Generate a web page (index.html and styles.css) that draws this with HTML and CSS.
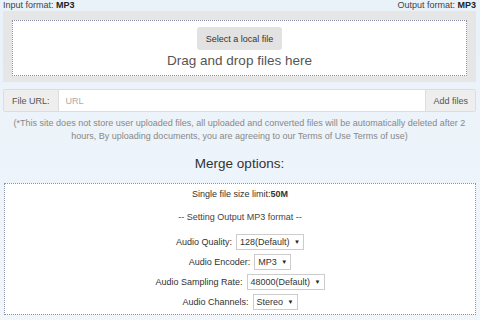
FILE: index.html
```html
<!DOCTYPE html>
<html lang="en">
<head>
    <meta charset="UTF-8">
    <meta name="viewport" content="width=device-width, initial-scale=1.0">
    <title>Merge MP3</title>
    <link rel="stylesheet" href="styles.css">
</head>
<body>
    <div class="formats">
        <span>Input format: <b>MP3</b></span>
        <span>Output format: <b>MP3</b></span>
    </div>

    <!-- Upload area -->
    <section class="upload">
        <div class="drop-zone">
            <button class="pick-btn">Select a local file</button>
            <div class="drop-text">Drag and drop files here</div>
        </div>
    </section>

    <div class="url-group">
        <span class="addon">File URL:</span>
        <input type="text" class="url-input" placeholder="URL">
        <span class="addon addon-btn">Add files</span>
    </div>

    <p class="notice">(*This site does not store user uploaded files, all uploaded and converted files will be automatically deleted after 2 hours, By uploading documents, you are agreeing to our Terms of Use Terms of use)</p>

    <h2 class="title">Merge options:</h2>

    <!-- Options -->
    <section class="options">
        <div class="limit">Single file size limit:<b>50M</b></div>
        <div class="setting">-- Setting Output MP3 format --</div>
        <div class="row">
            <label>Audio Quality:</label>
            <span class="select">128(Default) <i>&#9660;</i></span>
        </div>
        <div class="row">
            <label>Audio Encoder:</label>
            <span class="select">MP3 <i>&#9660;</i></span>
        </div>
        <div class="row">
            <label>Audio Sampling Rate:</label>
            <span class="select">48000(Default) <i>&#9660;</i></span>
        </div>
        <div class="row">
            <label>Audio Channels:</label>
            <span class="select">Stereo <i>&#9660;</i></span>
        </div>
    </section>
</body>
</html>
```

FILE: styles.css
```css
body {
    font-family: "Liberation Sans", Arial, sans-serif;
    font-size: 9px;
    color: #333;
    margin: 0;
    padding: 0 4px 0 3px;
    background: linear-gradient(to bottom, #e9f1f9, #f1f6fb);
    height: 320px;
    overflow: hidden;
}

.formats {
    display: flex;
    justify-content: space-between;
    height: 11px;
    line-height: 10px;
    color: #444;
}

.formats b {
    color: #222;
}

.upload {
    background-color: #e6e6e6;
    padding: 9px 9px 6px 9px;
}

.drop-zone {
    background-color: #fff;
    border: 1px dotted #8a8fa8;
    height: 54px;
    display: flex;
    flex-direction: column;
    align-items: center;
}

.pick-btn {
    margin-top: 6px;
    background-color: #e2e2e2;
    border: none;
    border-radius: 3px;
    font-family: inherit;
    font-size: 9px;
    color: #333;
    width: 85px;
    height: 23px;
    padding: 0;
}

.drop-text {
    font-size: 13.5px;
    color: #555;
    margin-top: 3px;
}

.url-group {
    display: flex;
    margin-top: 7px;
    height: 21px;
    border: 1px solid #ddd;
    border-radius: 2px;
}

.addon {
    background-color: #eee;
    color: #555;
    display: flex;
    align-items: center;
    padding: 0 8px 0 8px;
    white-space: nowrap;
    flex: none;
}

.addon-btn {
    padding: 0 7px 0 7px;
    border-left: 1px solid #ddd;
}

.url-input {
    flex: 1;
    min-width: 0;
    border: none;
    border-left: 1px solid #ddd;
    padding: 0 0 0 7px;
    font-family: inherit;
    font-size: 9px;
    outline: none;
}

.url-input::placeholder {
    color: #aaa;
}

.notice {
    margin: 5px 0 0 0;
    padding: 0 6px;
    text-align: center;
    color: #888;
    line-height: 13px;
}

.title {
    margin: 12px 0 0 0;
    text-align: center;
    font-weight: normal;
    font-size: 13.5px;
    color: #333;
    line-height: 18px;
}

.options {
    margin: 10px 0 0 1px;
    background-color: #fff;
    border: 1px dotted #8a8fa8;
    height: 130px;
    display: flex;
    flex-direction: column;
    align-items: center;
}

.limit {
    margin-top: 4px;
    line-height: 12px;
}

.setting {
    margin-top: 11px;
    line-height: 12px;
    color: #444;
}

.row {
    display: flex;
    align-items: center;
    gap: 4px;
    margin-top: 4px;
    height: 16px;
}

.setting + .row {
    margin-top: 11px;
}

.row label {
    color: #333;
}

.select {
    display: flex;
    align-items: center;
    height: 14px;
    border: 1px solid #ccc;
    background-color: #fff;
    color: #333;
    padding: 0 3px 0 3px;
    white-space: pre;
}

.select i {
    font-style: normal;
    font-size: 6px;
    margin-left: 2px;
    color: #222;
}
```
